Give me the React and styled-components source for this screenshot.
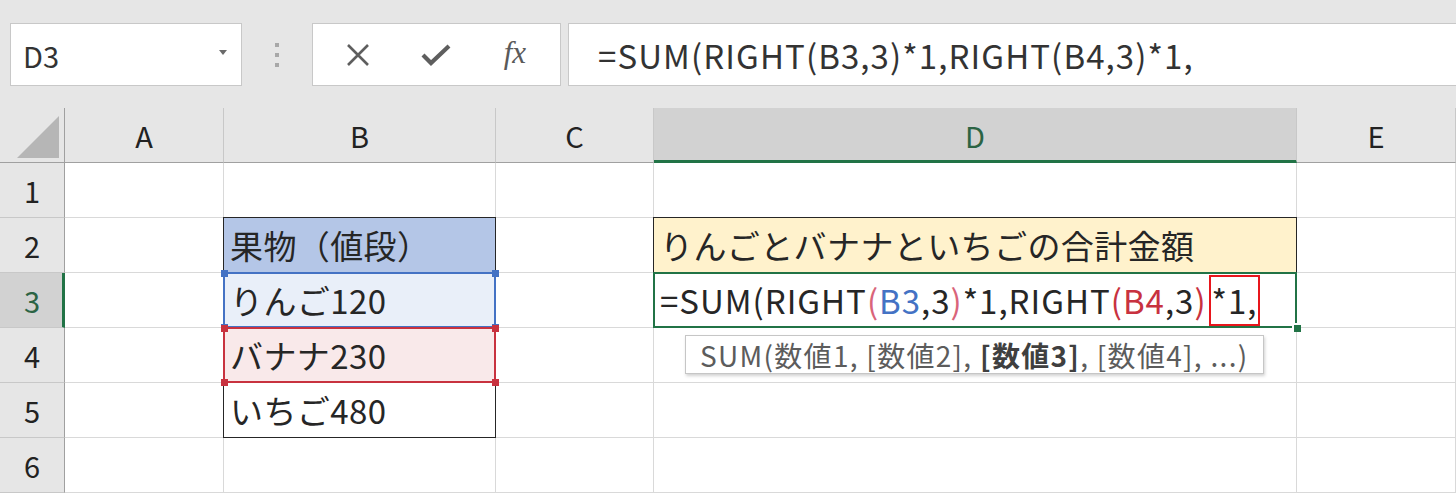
import styled, { createGlobalStyle } from 'styled-components'

const GlobalStyle = createGlobalStyle`
    body {
        margin: 0;
        background: #ffffff;
        overflow: hidden;
        font-family: "Noto Sans CJK JP", "Noto Sans", sans-serif;
    }
`

const Page = styled.div`
    width: 1456px;
    height: 494px;
    overflow: hidden;
    background: #ffffff;
`

const Toolbar = styled.div`
    height: 108px;
    box-sizing: border-box;
    padding: 23px 0 0 10px;
    display: flex;
    align-items: flex-start;
    background: #e6e6e6;
`

const Box = styled.div`
    height: 63px;
    box-sizing: border-box;
    background: #ffffff;
    border: 1px solid #c8c8c8;
    display: flex;
    align-items: center;
`

const NameBox = styled(Box)`
    width: 232px;
    padding: 0 14px 0 12px;
    justify-content: space-between;
    font-size: 29px;
    color: #333333;
`

const Caret = styled.span`
    width: 0;
    height: 0;
    border-left: 4px solid transparent;
    border-right: 4px solid transparent;
    border-top: 5px solid #6a6a6a;
    margin-top: -4px;
`

const Grip = styled.div`
    width: 70px;
    height: 63px;
    display: flex;
    flex-direction: column;
    align-items: center;
    justify-content: center;
    gap: 6px;
    span {
        width: 4px;
        height: 4px;
        background: #a8a8a8;
    }
`

const ButtonsBox = styled(Box)`
    width: 249px;
    justify-content: space-around;
    padding: 0 6px;
`

const IconButton = styled.span`
    width: 60px;
    display: flex;
    justify-content: center;
    align-items: center;
    color: #5e5e5e;
`

const Fx = styled.span`
    font-family: "Liberation Serif", "DejaVu Serif", serif;
    font-style: italic;
    font-size: 31px;
    color: #5a5a5a;
    margin-top: -4px;
`

const FormulaBar = styled(Box)`
    flex: 1;
    margin-left: 7px;
    margin-right: -4px;
    padding-left: 29px;
    font-size: 33px;
    letter-spacing: 1.1px;
    color: #333333;
`

const Sheet = styled.div`
    display: grid;
    grid-template-columns: 65px 159px 272px 158px 643px 159px;
    grid-template-rows: 55px repeat(6, 55px);
`

const HeaderCell = styled.div`
    box-sizing: border-box;
    background: ${p => (p.$active ? '#d2d2d2' : '#e6e6e6')};
    border-right: 1px solid #c8c8c8;
    border-bottom: ${p => (p.$active ? '3px solid #217346' : '1px solid #a0a0a0')};
    display: flex;
    align-items: center;
    justify-content: center;
    font-size: 29px;
    color: ${p => (p.$active ? '#2c6444' : '#222222')};
    padding-top: ${p => (p.$active ? '2px' : '0')};
`

const Corner = styled(HeaderCell)`
    border-right: 1px solid #a0a0a0;
    align-items: flex-start;
    justify-content: flex-start;
`

const RowHead = styled.div`
    box-sizing: border-box;
    background: ${p => (p.$active ? '#d2d2d2' : '#e6e6e6')};
    border-right: ${p => (p.$active ? '3px solid #217346' : '1px solid #a0a0a0')};
    border-bottom: 1px solid #c8c8c8;
    display: flex;
    align-items: center;
    justify-content: center;
    font-size: 29px;
    color: ${p => (p.$active ? '#2c6444' : '#222222')};
    padding-left: ${p => (p.$active ? '2px' : '0')};
`

const Cell = styled.div`
    position: relative;
    box-sizing: border-box;
    background: ${p => p.$bg || '#ffffff'};
    border-right: 1px solid #d9d9d9;
    border-bottom: 1px solid #d9d9d9;
    display: flex;
    align-items: center;
    padding-left: 6px;
    font-size: 33px;
    letter-spacing: 0.4px;
    color: #262626;
    white-space: nowrap;
    z-index: ${p => p.$z || 0};
`

// border drawn over a cell, covering the shared gridlines
const Frame = styled.div`
    position: absolute;
    top: -1px;
    left: -1px;
    right: -1px;
    bottom: -1px;
    pointer-events: none;
    border-style: solid;
    border-color: ${p => p.$color};
    border-width: ${p => p.$widths};
`

const Handle = styled.span`
    position: absolute;
    width: 7px;
    height: 7px;
    background: ${p => p.$color};
    ${p => (p.$y === 'top' ? 'top: -3px;' : 'bottom: -4px;')}
    ${p => (p.$x === 'left' ? 'left: -3px;' : 'right: -4px;')}
`

const FillHandle = styled.span`
    position: absolute;
    right: -5px;
    bottom: -5px;
    width: 7px;
    height: 7px;
    background: #217346;
    border-left: 2px solid #ffffff;
    border-top: 2px solid #ffffff;
`

const Formula = styled.span`
    font-size: 33px;
    letter-spacing: 1px;
    display: flex;
    align-items: center;
    height: 100%;
`

const Ref = styled.span`
    color: ${p => p.$color};
`

const Marked = styled.span`
    display: flex;
    align-items: center;
    height: 51px;
    box-sizing: border-box;
    border: 2px solid #e8161c;
    padding: 0 1px 0 1px;
    margin-left: 2px;
`

const Tooltip = styled.div`
    position: absolute;
    left: 31px;
    top: 62px;
    height: 39px;
    box-sizing: border-box;
    padding: 0 14px;
    display: flex;
    align-items: center;
    background: #ffffff;
    border: 1px solid #c6c6c6;
    box-shadow: 1px 2px 3px rgba(0, 0, 0, 0.18);
    font-size: 28px;
    letter-spacing: 1.3px;
    color: #5c5c5c;
    white-space: pre;
    b {
        color: #3f3f3f;
        font-weight: 700;
    }
`

const BLUE = '#4472c4'
const RED = '#c8323f'
const PAREN = '#d9647a'

const corners = color => (
    <>
        <Handle $color={color} $y="top" $x="left" />
        <Handle $color={color} $y="top" $x="right" />
        <Handle $color={color} $y="bottom" $x="left" />
        <Handle $color={color} $y="bottom" $x="right" />
    </>
)

const columns = ['A', 'B', 'C', 'D', 'E']

export default function App() {
    return (
        <Page>
            <GlobalStyle />
            <Toolbar>
                <NameBox>
                    D3
                    <Caret />
                </NameBox>
                <Grip>
                    <span />
                    <span />
                    <span />
                </Grip>
                <ButtonsBox>
                    <IconButton>
                        <svg width="24" height="24" viewBox="0 0 24 24">
                            <path d="M2 2 L22 22 M22 2 L2 22" stroke="currentColor" strokeWidth="2.6" fill="none" />
                        </svg>
                    </IconButton>
                    <IconButton>
                        <svg width="30" height="24" viewBox="0 0 30 24">
                            <path d="M2 12 L10 20 L28 3" stroke="currentColor" strokeWidth="4.2" fill="none" />
                        </svg>
                    </IconButton>
                    <IconButton>
                        <Fx>fx</Fx>
                    </IconButton>
                </ButtonsBox>
                <FormulaBar>=SUM(RIGHT(B3,3)*1,RIGHT(B4,3)*1,</FormulaBar>
            </Toolbar>

            <Sheet>
                <Corner>
                    <svg width="64" height="54" viewBox="0 0 64 54">
                        <polygon points="59,8 59,50 17,50" fill="#b6b6b6" />
                    </svg>
                </Corner>
                {columns.map(c => (
                    <HeaderCell key={c} $active={c === 'D'}>
                        {c}
                    </HeaderCell>
                ))}

                <RowHead>1</RowHead>
                <Cell />
                <Cell />
                <Cell />
                <Cell />
                <Cell />

                <RowHead>2</RowHead>
                <Cell />
                <Cell $bg="#b4c6e7">
                    <Frame $color="#262626" $widths="1px 1px 0 1px" />
                    果物（値段）
                </Cell>
                <Cell />
                <Cell $bg="#fff2cc">
                    <Frame $color="#262626" $widths="1px 1px 1px 1px" />
                    りんごとバナナといちごの合計金額
                </Cell>
                <Cell />

                <RowHead $active>3</RowHead>
                <Cell />
                <Cell $bg="#e9eff9" $z={2}>
                    <Frame $color={BLUE} $widths="2px" />
                    {corners(BLUE)}
                    りんご120
                </Cell>
                <Cell />
                <Cell $z={3}>
                    <Frame $color="#217346" $widths="2px 2px 2px 2px" />
                    <FillHandle />
                    <Formula>
                        =SUM(RIGHT<Ref $color={PAREN}>(</Ref>
                        <Ref $color={BLUE}>B3</Ref>,3<Ref $color={PAREN}>)</Ref>*1,RIGHT
                        <Ref $color={RED}>(B4</Ref>,3<Ref $color={RED}>)</Ref>
                        <Marked>*1,</Marked>
                    </Formula>
                    <Tooltip>
                        SUM(数値1, [数値2], <b>[数値3]</b>, [数値4], ...)
                    </Tooltip>
                </Cell>
                <Cell />

                <RowHead>4</RowHead>
                <Cell />
                <Cell $bg="#f9e9ea" $z={2}>
                    <Frame $color={RED} $widths="2px" />
                    {corners(RED)}
                    バナナ230
                </Cell>
                <Cell />
                <Cell />
                <Cell />

                <RowHead>5</RowHead>
                <Cell />
                <Cell>
                    <Frame $color="#262626" $widths="0 1px 1px 1px" />
                    いちご480
                </Cell>
                <Cell />
                <Cell />
                <Cell />

                <RowHead>6</RowHead>
                <Cell />
                <Cell />
                <Cell />
                <Cell />
                <Cell />
            </Sheet>
        </Page>
    )
}
